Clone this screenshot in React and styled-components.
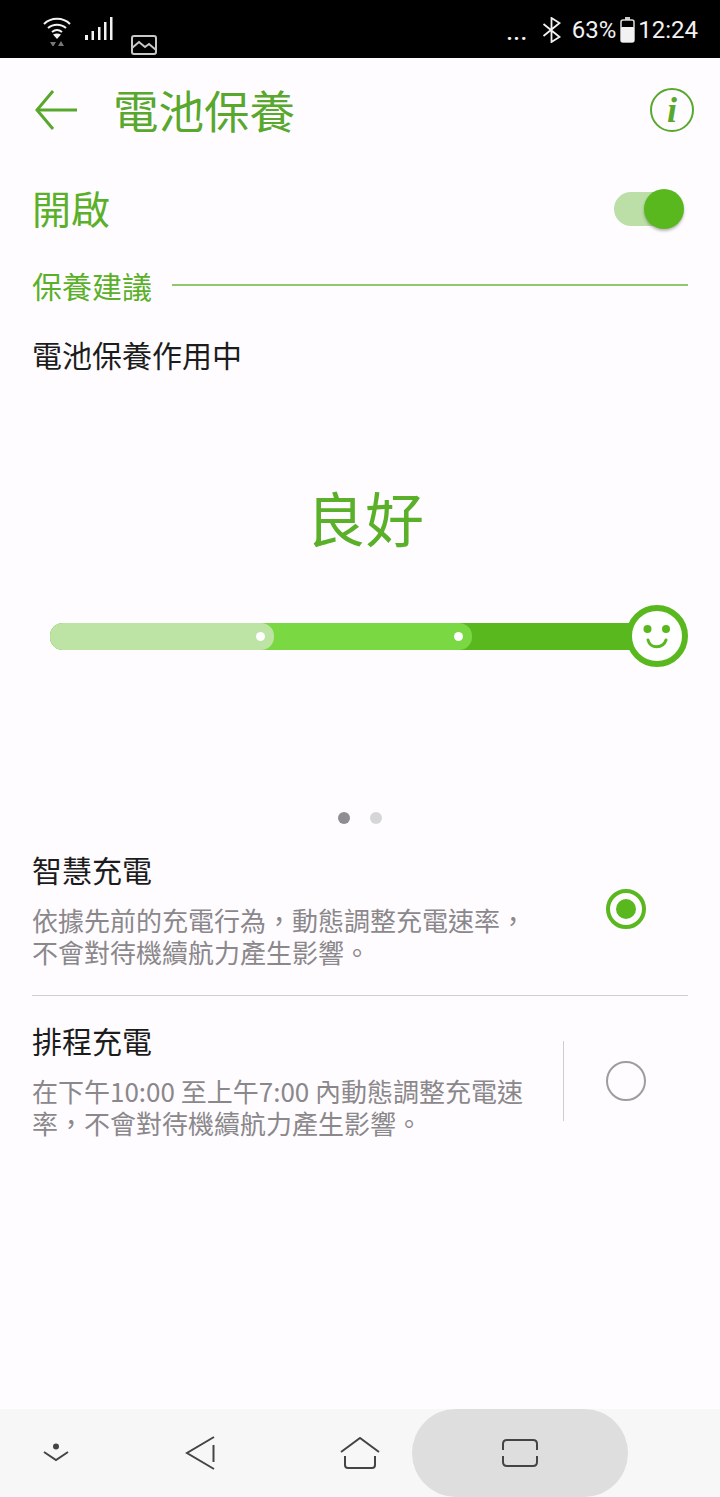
import React from 'react';
import styled, { createGlobalStyle } from 'styled-components';

const GREEN = '#5ab81f';
const TEXT_GREEN = '#5bb02a';
const TITLE_GREEN = '#57a82c';

const Global = createGlobalStyle`
  html, body { margin: 0; padding: 0; background: #fffcff; }
  body { font-family: "Noto Sans CJK TC", "Noto Sans", sans-serif; }
`;

const Screen = styled.div`
  width: 720px;
  height: 1497px;
  display: flex;
  flex-direction: column;
  background: #fffcff;
  overflow: hidden;
`;

const StatusBar = styled.div`
  height: 58px;
  flex: none;
  background: #000;
  color: #f2f2f2;
  display: flex;
  justify-content: space-between;
  padding: 0 22px 0 42px;
`;

const StatusLeft = styled.div`
  display: flex;
  align-items: flex-start;
`;

const StatusRight = styled.div`
  display: flex;
  align-items: center;
  height: 60px;
  font-family: Roboto, sans-serif;
  font-size: 24px;
`;

const StatusDots = styled.span`
  margin: 4px 14px 0 0;
  letter-spacing: 0.5px;
  font-weight: 500;
`;

const Main = styled.div`
  flex: 1;
  display: flex;
  flex-direction: column;
  padding: 0 32px;
`;

const Header = styled.div`
  height: 104px;
  display: flex;
  align-items: center;
`;

const Title = styled.h1`
  margin: 0 0 2px 35px;
  flex: 1;
  font-size: 45.5px;
  font-weight: 400;
  line-height: 60px;
  color: ${TITLE_GREEN};
`;

const InfoCircle = styled.div`
  width: 44px;
  height: 44px;
  box-sizing: border-box;
  margin-right: -6px;
  border: 2px solid ${TITLE_GREEN};
  border-radius: 50%;
  display: flex;
  align-items: center;
  justify-content: center;
`;

const InfoMark = styled.span`
  font-family: "Liberation Serif", serif;
  font-style: italic;
  font-weight: 700;
  font-size: 36px;
  line-height: 1;
  color: ${TITLE_GREEN};
`;

const EnableRow = styled.div`
  height: 92px;
  display: flex;
  align-items: center;
  justify-content: space-between;
`;

const EnableLabel = styled.div`
  margin-bottom: 2px;
  font-size: 39px;
  line-height: 56px;
  color: ${TEXT_GREEN};
`;

const Toggle = styled.div`
  position: relative;
  width: 68px;
  height: 34px;
  margin: 2px 6px 0 0;
  border-radius: 17px;
  background: #bbdfa6;
`;

const ToggleKnob = styled.div`
  position: absolute;
  right: -2px;
  top: -3px;
  width: 40px;
  height: 40px;
  border-radius: 50%;
  background: ${GREEN};
  box-shadow: 0 2px 3px rgba(0, 0, 0, 0.28);
`;

const SectionRow = styled.div`
  display: flex;
  align-items: center;
  gap: 20px;
  height: 44px;
  margin-top: 9px;
`;

const SectionLabel = styled.div`
  font-size: 30px;
  line-height: 44px;
  color: ${TEXT_GREEN};
`;

const SectionLine = styled.div`
  flex: 1;
  height: 2px;
  background: #90c870;
`;

const ActiveText = styled.div`
  margin-top: 25px;
  font-size: 30px;
  line-height: 44px;
  color: #1c1c1c;
`;

const Rating = styled.div`
  margin-top: 99px;
  padding-left: 10px;
  text-align: center;
  font-size: 59px;
  line-height: 84px;
  color: ${TEXT_GREEN};
`;

const Meter = styled.div`
  position: relative;
  height: 27px;
  margin: 64px 26px 0 18px;
  border-radius: 13px;
  background: ${GREEN};
`;

const Segment = styled.div`
  position: absolute;
  left: 0;
  top: 0;
  bottom: 0;
  width: ${p => p.$width}px;
  border-radius: 13px;
  background: ${p => p.$color};
  z-index: ${p => p.$layer};
`;

const SegmentDot = styled.div`
  position: absolute;
  right: 9px;
  top: 9px;
  width: 9px;
  height: 9px;
  border-radius: 50%;
  background: #fff;
`;

const Smile = styled.svg`
  position: absolute;
  right: -26px;
  top: -18px;
  width: 62px;
  height: 62px;
  z-index: 3;
`;

const Pager = styled.div`
  margin-top: 162px;
  display: flex;
  justify-content: center;
  gap: 20px;
`;

const PagerDot = styled.div`
  width: 12px;
  height: 12px;
  border-radius: 50%;
  background: ${p => (p.$active ? '#8f8d91' : '#d6d5d8')};
`;

const OptionList = styled.div`
  margin-top: -2px;
`;

const Option = styled.div`
  display: flex;
  align-items: center;
  height: ${p => p.$height}px;
  border-bottom: ${p => (p.$divider ? '1px solid #cfcdcf' : 'none')};
`;

const OptionText = styled.div`
  width: 531px;
  flex: none;
  padding-bottom: ${p => p.$lift}px;
`;

const OptionTitle = styled.div`
  font-size: 30px;
  line-height: 40px;
  color: #1c1c1c;
`;

const OptionDesc = styled.div`
  margin-top: 15px;
  font-size: 26px;
  line-height: 32px;
  color: #8a888b;
  white-space: nowrap;
`;

const OptionAction = styled.div`
  flex: 1;
  height: 80px;
  display: flex;
  align-items: center;
  justify-content: center;
  border-left: 1px solid ${p => (p.$divider ? '#cfcdcf' : 'transparent')};
`;

const Radio = styled.div`
  width: 40px;
  height: 40px;
  box-sizing: border-box;
  border-radius: 50%;
  border: ${p => (p.$on ? `4px solid ${GREEN}` : '2px solid #9e9c9f')};
  display: flex;
  align-items: center;
  justify-content: center;

  &::after {
    content: '';
    display: ${p => (p.$on ? 'block' : 'none')};
    width: 20px;
    height: 20px;
    border-radius: 50%;
    background: ${GREEN};
  }
`;

const NavBar = styled.div`
  height: 88px;
  flex: none;
  display: grid;
  grid-template-columns: 112px 176px 124px 216px;
  background: #f7f7f7;
`;

const NavItem = styled.div`
  display: flex;
  align-items: center;
  justify-content: center;
  margin-right: ${p => p.$overhang || 0}px;
  background: ${p => (p.$pressed ? '#dedede' : 'transparent')};
  border-radius: ${p => (p.$pressed ? '44px' : '0')};
`;

export default function App() {
  return (
    <Screen>
      <Global />
      <StatusBar>
        <StatusLeft>
          <svg width="30" height="32" viewBox="0 0 30 32" style={{ marginTop: 14 }} fill="none" stroke="#f2f2f2" strokeWidth="2">
            <path d="M2 10C9 3 21 3 28 10" />
            <path d="M6 14c5-4.500 13-4.500 18 0" />
            <path d="M10 18c3-2.500 7-2.500 10 0" />
            <path d="M11 20.500c2.500-1.500 5.500-1.500 8 0L15 25z" fill="#f2f2f2" stroke="none" />
            <path d="M8 29h6l-3 5z" transform="translate(0 -1)" fill="#777" stroke="none" />
            <path d="M16 33h6l-3-5z" transform="translate(0 -1)" fill="#777" stroke="none" />
          </svg>
          <svg width="30" height="26" viewBox="0 0 30 26" style={{ marginTop: 15, marginLeft: 12 }} fill="#f2f2f2">
            <rect x="1" y="20" width="3" height="5" />
            <rect x="7.500" y="16" width="2.500" height="9" />
            <rect x="14" y="12" width="2.500" height="13" />
            <rect x="20" y="7" width="2.500" height="18" />
            <rect x="26" y="2" width="2.500" height="23" />
          </svg>
          <svg width="28" height="22" viewBox="0 0 28 22" style={{ marginTop: 34, marginLeft: 16 }} fill="none" stroke="#c8c8c8" strokeWidth="2">
            <rect x="2" y="2" width="24" height="18" rx="2" />
            <path d="M2 14l7-6 6 5 4-3 7 6" />
          </svg>
        </StatusLeft>
        <StatusRight>
          <StatusDots>...</StatusDots>
          <svg width="20" height="26" viewBox="0 0 20 26" fill="none" stroke="#f2f2f2" strokeWidth="1.800">
            <path d="M1.500 7l16 13-8 5V1l8 5-16 13" />
          </svg>
          <span style={{ marginLeft: 10 }}>63%</span>
          <svg width="16" height="26" viewBox="0 0 16 26" style={{ marginLeft: 4 }}>
            <rect x="5" y="0" width="5" height="3" fill="#ccc" />
            <rect x="1" y="3" width="13" height="22" rx="2" fill="none" stroke="#ddd" strokeWidth="1.500" />
            <rect x="1" y="10" width="13" height="15" rx="1" fill="#f2f2f2" />
          </svg>
          <span style={{ marginLeft: 2 }}>12:24</span>
        </StatusRight>
      </StatusBar>

      <Main>
        <Header>
          <svg width="46" height="44" viewBox="0 0 46 44" fill="none" stroke={TITLE_GREEN} strokeWidth="3" style={{ flex: 'none' }}>
            <path d="M45 22H6" />
            <path d="M21 3L5 22l16 19" />
          </svg>
          <Title>電池保養</Title>
          <InfoCircle>
            <InfoMark>i</InfoMark>
          </InfoCircle>
        </Header>

        <EnableRow>
          <EnableLabel>開啟</EnableLabel>
          <Toggle>
            <ToggleKnob />
          </Toggle>
        </EnableRow>

        <SectionRow>
          <SectionLabel>保養建議</SectionLabel>
          <SectionLine />
        </SectionRow>

        <ActiveText>電池保養作用中</ActiveText>

        <Rating>良好</Rating>

        <Meter>
          <Segment $width={224} $color="#bde3a5" $layer={2}>
            <SegmentDot />
          </Segment>
          <Segment $width={422} $color="#7ad842" $layer={1}>
            <SegmentDot />
          </Segment>
          <Smile viewBox="0 0 62 62">
            <circle cx="31" cy="31" r="28" fill="#fff" stroke={GREEN} strokeWidth="6" />
            <circle cx="21.500" cy="24" r="4" fill={GREEN} />
            <circle cx="40" cy="24" r="4" fill={GREEN} />
            <path d="M22 35c2 9 15 9 18 0" fill="none" stroke={GREEN} strokeWidth="3" strokeLinecap="round" />
          </Smile>
        </Meter>

        <Pager>
          <PagerDot $active />
          <PagerDot />
        </Pager>

        <OptionList>
          <Option $height={173} $divider>
            <OptionText $lift={0}>
              <OptionTitle>智慧充電</OptionTitle>
              <OptionDesc>
                依據先前的充電行為，動態調整充電速率，
                <br />
                不會對待機續航力產生影響。
              </OptionDesc>
            </OptionText>
            <OptionAction>
              <Radio $on />
            </OptionAction>
          </Option>

          <Option $height={170}>
            <OptionText $lift={4}>
              <OptionTitle>排程充電</OptionTitle>
              <OptionDesc>
                在下午10:00 至上午7:00 內動態調整充電速
                <br />
                率，不會對待機續航力產生影響。
              </OptionDesc>
            </OptionText>
            <OptionAction $divider>
              <Radio />
            </OptionAction>
          </Option>
        </OptionList>
      </Main>

      <NavBar>
        <NavItem>
          <svg width="28" height="20" viewBox="0 0 28 20" fill="none" stroke="#444" strokeWidth="2">
            <circle cx="14" cy="3.500" r="3" fill="#444" stroke="none" />
            <path d="M2 9l12 8 12-8" />
          </svg>
        </NavItem>
        <NavItem>
          <svg width="30" height="34" viewBox="0 0 30 34" fill="none" stroke="#444" strokeWidth="2">
            <path d="M29 1L2 17l27 16" />
            <path d="M28.500 9v17" />
          </svg>
        </NavItem>
        <NavItem $overhang={-20}>
          <svg width="40" height="32" viewBox="0 0 40 32" fill="none" stroke="#444" strokeWidth="2">
            <path d="M1 15L20 1l19 14" />
            <path d="M5 19v9q0 3 3 3h24q3 0 3-3v-9" />
          </svg>
        </NavItem>
        <NavItem $pressed>
          <svg width="36" height="28" viewBox="0 0 36 28" fill="none" stroke="#444" strokeWidth="2">
            <path d="M1 11V5q0-4 4-4h26q4 0 4 4v6" />
            <path d="M1 17v6q0 4 4 4h26q4 0 4-4v-6" />
          </svg>
        </NavItem>
      </NavBar>
    </Screen>
  );
}
